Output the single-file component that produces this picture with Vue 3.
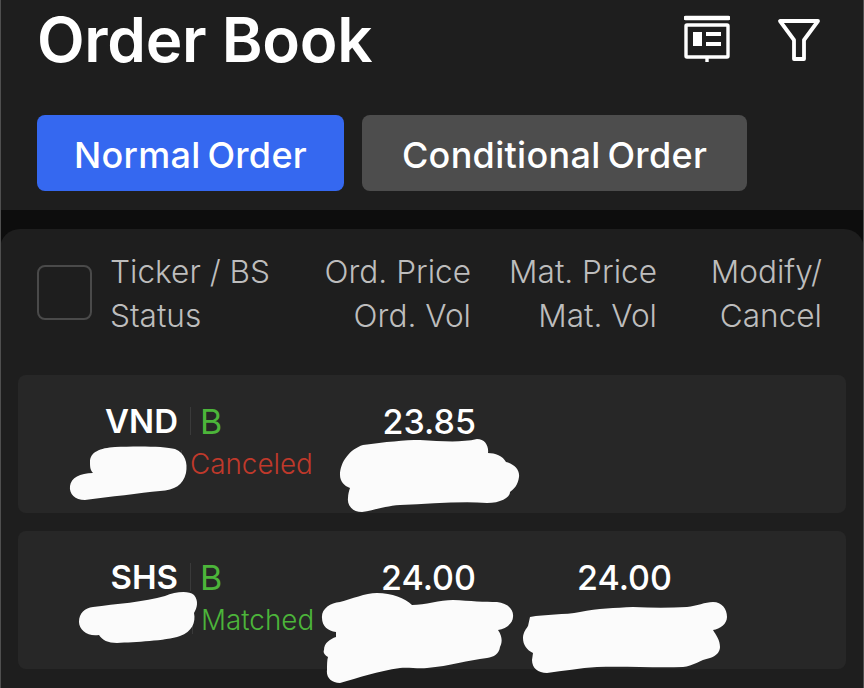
<template>
  <div class="screen">
    <!-- Top bar -->
    <header class="top">
      <div class="title-row">
        <h1 class="title">Order Book</h1>
        <div class="actions">
          <svg class="icon" width="46" height="48" viewBox="0 0 46 48" fill="none" stroke="#fff" stroke-width="3.4">
            <path d="M1.5 3H44.5" stroke-width="4.4" stroke-linecap="round" />
            <rect x="2" y="10" width="42" height="32" rx="1" />
            <rect x="9" y="17" width="9" height="14" fill="#fff" stroke="none" />
            <rect x="22" y="17" width="15" height="4" fill="#fff" stroke="none" />
            <rect x="22" y="27" width="15" height="4" fill="#fff" stroke="none" />
            <path d="M23 42V47" />
          </svg>
          <svg class="icon" width="44" height="48" viewBox="0 0 44 48" fill="none" stroke="#fff" stroke-width="3.8" stroke-linejoin="round">
            <path d="M3 6H41L27 25V44H17V25Z" />
          </svg>
        </div>
      </div>
      <div class="tabs">
        <button class="tab tab-active">Normal Order</button>
        <button class="tab">Conditional Order</button>
      </div>
    </header>

    <!-- Orders -->
    <section class="panel">
      <div class="head">
        <span class="check"></span>
        <div class="head-cell head-ticker">Ticker / BS<br />Status</div>
        <div class="head-cell head-ord">Ord. Price<br />Ord. Vol</div>
        <div class="head-cell head-mat">Mat. Price<br />Mat. Vol</div>
        <div class="head-cell head-mod">Modify/<br />Cancel</div>
      </div>

      <div v-for="order in orders" :key="order.ticker" class="row">
        <div class="info">
          <div class="line">
            <span class="ticker">{{ order.ticker }}</span>
            <i class="sep"></i>
            <span class="side">B</span>
          </div>
          <div class="line line-status">
            <span :style="{ width: order.statusOffset + 'px' }"></span>
            <i class="sep"></i>
            <span class="status" :class="order.statusClass">{{ order.status }}</span>
          </div>
        </div>
        <div class="price price-ord">{{ order.ordPrice }}</div>
        <div class="price price-mat">{{ order.matPrice }}</div>
      </div>
    </section>

    <!-- Hand-drawn redactions over the screenshot -->
    <svg class="scribbles" width="864" height="688" viewBox="0 0 864 688" fill="#fbfbfb">
      <path v-for="(d, i) in scribbles" :key="i" :d="d" />
    </svg>
  </div>
</template>

<script setup>
const orders = [
  { ticker: 'VND', status: 'Canceled', statusClass: 'red', statusOffset: 151, ordPrice: '23.85', matPrice: '' },
  { ticker: 'SHS', status: 'Matched', statusClass: 'green', statusOffset: 162, ordPrice: '24.00', matPrice: '24.00' }
]

const scribbles = [
  'M90 462C90 452 100 448 115 447C135 446 165 446 175 449C185 453 188 463 186 473C183 485 175 490 160 491C140 493 110 497 85 500C75 500 69 494 70 486C71 478 80 473 93 473C90 470 90 466 90 462Z',
  'M93 607C115 604 145 602 165 596C175 592 188 590 194 595C199 601 197 608 194 613C196 622 192 632 180 636C165 641 135 642 117 643C108 643 102 640 99 635C88 637 79 630 79 622C79 613 85 608 93 607Z',
  'M340 475C340 462 350 449 363 445C385 442 405 440 420 440C440 441 460 443 477 439C485 439 489 446 488 453C495 453 503 456 506 462C514 464 520 470 519 477C518 485 514 489 510 492C510 498 500 503 487 503C460 501 430 504 400 505C385 506 375 510 362 512C352 512 347 505 348 498C348 494 349 491 350 488C344 486 340 481 340 475Z',
  'M322 618C321 609 330 603 340 602C352 599 365 593 377 593C392 593 405 598 412 605C425 605 440 600 453 600C470 601 485 602 497 602C507 603 514 609 513 617C513 623 506 629 498 630C503 637 502 643 500 647C499 654 494 657 487 658C468 660 450 666 427 668C418 669 408 667 400 668C378 671 358 678 340 683C331 683 326 677 327 670C327 665 327 660 328 657C324 655 323 652 324 650C324 643 330 639 336 637L336 632C328 631 322 626 322 618Z',
  'M523 638C523 632 527 628 528 626L530 617C545 614 565 615 580 612C598 608 615 608 633 607C652 608 670 608 687 607C697 606 705 602 713 602C722 602 727 609 727 617C727 624 720 629 713 630C716 635 720 640 720 647C720 652 716 656 710 658C700 660 693 666 683 667C655 668 625 666 597 667C580 668 563 671 547 673C538 673 532 668 532 660L533 653C527 650 523 645 523 638Z'
]
</script>

<style>
html,
body {
  background: #1e1e1e;
}
</style>

<style scoped>
.screen {
  position: relative;
  width: 864px;
  height: 688px;
  overflow: hidden;
  background: #0d0d0d;
  color: #fff;
  font-family: Inter, "Liberation Sans", sans-serif;
}

/* thin grey edge left by the screenshot crop */
.screen::after {
  content: "";
  position: absolute;
  inset: 0;
  border-left: 1px solid #4f4f4f;
  border-right: 1px solid #4f4f4f;
  pointer-events: none;
}

.top {
  height: 210px;
  box-sizing: border-box;
  padding: 0 37px;
  background: #1e1e1e;
}

.title-row {
  display: flex;
  justify-content: space-between;
  height: 115px;
}

.title {
  margin: 0;
  padding-top: 4px;
  font-size: 62px;
  line-height: 72px;
  font-weight: 600;
  letter-spacing: -0.3px;
}

.actions {
  display: flex;
  gap: 47px;
  padding: 15px 6px 0 0;
}

.icon {
  display: block;
}

.tabs {
  display: flex;
  gap: 18px;
}

.tab {
  width: 307px;
  height: 76px;
  padding: 3px 0 0;
  border: 0;
  border-radius: 8px;
  background: #4d4d4d;
  color: #fff;
  font-family: inherit;
  font-size: 36px;
  font-weight: 500;
  letter-spacing: 0.3px;
  word-spacing: -3px;
}

.tab + .tab {
  width: 385px;
}

.tab-active {
  background: #3568f0;
}

.panel {
  height: 459px;
  margin-top: 19px;
  padding: 0 18px;
  box-sizing: border-box;
  border-radius: 20px 20px 0 0;
  background: #1e1e1e;
}

.head {
  display: flex;
  align-items: center;
  height: 146px;
  padding: 0 0 20px 19px;
  box-sizing: border-box;
  color: #bdbdbd;
  font-size: 31.6px;
  line-height: 44px;
  font-weight: 300;
}

.check {
  flex: none;
  width: 55px;
  height: 55px;
  box-sizing: border-box;
  border: 2px solid #4a4a4a;
  border-radius: 8px;
}

.head-cell {
  flex: none;
  padding-top: 4px;
  white-space: nowrap;
}

.head-ticker {
  width: 176px;
  margin-left: 18px;
}

.head-ord,
.head-mat,
.head-mod {
  text-align: right;
}

.head-ord {
  width: 185px;
}

.head-mat {
  width: 186px;
}

.head-mod {
  width: 165px;
}

.row {
  display: grid;
  grid-template-columns: 300px 158px 196px;
  height: 138px;
  margin-bottom: 18px;
  padding-top: 24px;
  box-sizing: border-box;
  border-radius: 8px;
  background: #272727;
}

.line {
  display: flex;
  align-items: center;
  height: 44px;
}

.line-status {
  height: 42px;
}

.ticker {
  width: 160px;
  text-align: right;
  font-size: 33px;
  font-weight: 600;
}

.sep {
  width: 1px;
  height: 28px;
  margin: 0 9px 0 12px;
  background: #3a3a3a;
}

.side {
  color: #4cb53a;
  font-size: 34px;
}

.status {
  margin-left: -1px;
  font-size: 27.8px;
  font-weight: 300;
  white-space: nowrap;
}

.red {
  color: #c0392b;
}

.green {
  color: #4cb53a;
}

.price {
  padding-top: 1px;
  text-align: right;
  font-size: 34px;
  line-height: 44px;
  font-weight: 500;
}

.scribbles {
  position: absolute;
  inset: 0;
  pointer-events: none;
}
</style>
